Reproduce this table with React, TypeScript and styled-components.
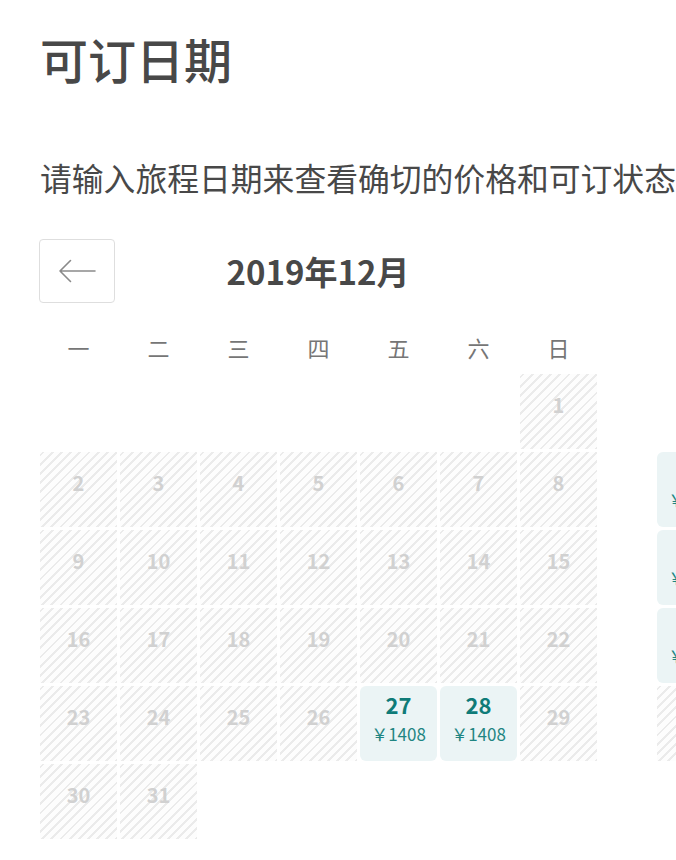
import React from "react";
import styled, { createGlobalStyle, css } from "styled-components";

const GlobalStyle = createGlobalStyle`
  html, body { margin: 0; padding: 0; background: #ffffff; }
  body { font-family: "Noto Sans CJK SC", "Noto Sans", sans-serif; color: #484848; }
`;

const Page = styled.div`
  width: 676px;
  height: 860px;
  overflow: hidden;
  box-sizing: border-box;
  padding-left: 40px;
`;

const Title = styled.h1`
  margin: 34px 0 0;
  font-size: 48px;
  line-height: 48px;
  font-weight: 500;
  color: #484848;
  white-space: nowrap;
`;

const Subtitle = styled.p`
  margin: 79px 0 0;
  font-size: 31.8px;
  line-height: 32px;
  font-weight: 400;
  color: #484848;
  white-space: nowrap;
`;

const Months = styled.div`
  display: flex;
  gap: 60px;
  margin-top: 46px;
  width: max-content;
`;

const Month = styled.section`
  width: 557px;
  flex: none;
`;

const MonthHeader = styled.div`
  display: grid;
  grid-template-columns: 76px 1fr 76px;
  align-items: center;
  height: 64px;
  margin-left: -1px;
`;

const NavButton = styled.button`
  width: 76px;
  height: 64px;
  box-sizing: border-box;
  border: 1px solid #dedede;
  border-radius: 4px;
  background: #fff;
  padding: 0;
  display: flex;
  align-items: center;
  justify-content: center;
  cursor: pointer;
`;

const MonthTitle = styled.h2`
  margin: 0;
  text-align: center;
  font-size: 33px;
  line-height: 40px;
  font-weight: 700;
  color: #484848;
`;

const WeekRow = styled.div`
  display: grid;
  grid-template-columns: repeat(7, 77px);
  column-gap: 3px;
  margin-top: 28px;
  height: 32px;
  align-items: center;
`;

const WeekDay = styled.div`
  text-align: center;
  font-size: 22px;
  line-height: 32px;
  font-weight: 400;
  color: #767676;
`;

const DaysGrid = styled.div`
  display: grid;
  grid-template-columns: repeat(7, 77px);
  grid-auto-rows: 75px;
  gap: 3px;
  margin-top: 11px;
`;

type Kind = "blank" | "off" | "on";

const Cell = styled.div<{ $kind: Kind }>`
  box-sizing: border-box;
  display: flex;
  flex-direction: column;
  align-items: center;
  ${(p) =>
    p.$kind === "off" &&
    css`
      justify-content: center;
      padding-bottom: 13px;
      background-color: #fdfdfd;
      background-image: repeating-linear-gradient(
        -45deg,
        #ebebeb 0px,
        #ebebeb 2px,
        transparent 2px,
        transparent 6.5px
      );
    `}
  ${(p) =>
    p.$kind === "on" &&
    css`
      justify-content: flex-start;
      padding-top: 5px;
      background: #ebf4f5;
      border-radius: 6px;
      cursor: pointer;
    `}
`;

const DayNum = styled.span<{ $on?: boolean }>`
  font-family: "Noto Sans CJK SC", "Noto Sans", sans-serif;
  font-weight: 700;
  font-size: ${(p) => (p.$on ? "22px" : "20px")};
  line-height: 26px;
  color: ${(p) => (p.$on ? "#0f7b78" : "#d1d1d1")};
`;

const Price = styled.span`
  margin-top: 6px;
  font-size: 17px;
  line-height: 22px;
  font-weight: 400;
  color: #1f8582;
  white-space: nowrap;
`;

const ArrowLeft = () => (
  <svg width="40" height="26" viewBox="0 0 40 26" fill="none">
    <path d="M3 13 H38 M3 13 L13.5 2.5 M3 13 L13.5 23.5" stroke="#8a8a8a" strokeWidth="1.6" strokeLinecap="round" />
  </svg>
);

const WEEK = ["一", "二", "三", "四", "五", "六", "日"];

type Day = { n: number; price?: number } | null;

function buildMonth(offset: number, days: number, available: Record<number, number>): Day[] {
  const out: Day[] = [];
  for (let i = 0; i < offset; i++) out.push(null);
  for (let d = 1; d <= days; d++) out.push({ n: d, price: available[d] });
  return out;
}

const december = buildMonth(6, 31, { 27: 1408, 28: 1408 });
const janAvail: Record<number, number> = {};
for (let d = 1; d <= 26; d++) janAvail[d] = 1408;
const january = buildMonth(2, 31, janAvail);

const MonthView = ({ title, days, showBack }: { title: string; days: Day[]; showBack: boolean }) => (
  <Month>
    <MonthHeader>
      {showBack ? (
        <NavButton aria-label="上个月">
          <ArrowLeft />
        </NavButton>
      ) : (
        <span />
      )}
      <MonthTitle>{title}</MonthTitle>
      <span />
    </MonthHeader>
    <WeekRow>
      {WEEK.map((w) => (
        <WeekDay key={w}>{w}</WeekDay>
      ))}
    </WeekRow>
    <DaysGrid>
      {days.map((d, i) =>
        d === null ? (
          <Cell key={i} $kind="blank" />
        ) : d.price ? (
          <Cell key={i} $kind="on">
            <DayNum $on>{d.n}</DayNum>
            <Price>￥{d.price}</Price>
          </Cell>
        ) : (
          <Cell key={i} $kind="off">
            <DayNum>{d.n}</DayNum>
          </Cell>
        )
      )}
    </DaysGrid>
  </Month>
);

export default function App() {
  return (
    <>
      <GlobalStyle />
      <Page>
        <Title>可订日期</Title>
        <Subtitle>请输入旅程日期来查看确切的价格和可订状态</Subtitle>
        <Months>
          <MonthView title="2019年12月" days={december} showBack />
          <MonthView title="2020年1月" days={january} showBack={false} />
        </Months>
      </Page>
    </>
  );
}
